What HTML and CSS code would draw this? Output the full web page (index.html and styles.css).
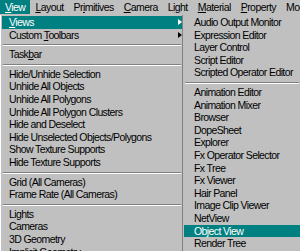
FILE: index.html
```html
<!DOCTYPE html>
<html lang="en">
<head>
  <meta charset="UTF-8">
  <title>View menu</title>
  <link rel="stylesheet" href="styles.css">
</head>
<body>
  <div class="menubar">
    <div class="bar-item active"><u>V</u>iew</div>
    <div class="bar-item"><u>L</u>ayout</div>
    <div class="bar-item">Pr<u>i</u>mitives</div>
    <div class="bar-item"><u>C</u>amera</div>
    <div class="bar-item">Li<u>g</u>ht</div>
    <div class="bar-item"><u>M</u>aterial</div>
    <div class="bar-item"><u>P</u>roperty</div>
    <div class="bar-item">Modify</div>
  </div>

  <div class="menus">
    <div class="menu">
      <div class="item selected has-sub"><u>V</u>iews</div>
      <div class="item has-sub">Custom <u>T</u>oolbars</div>
      <div class="sep"></div>
      <div class="item">Task<u>b</u>ar</div>
      <div class="sep"></div>
      <div class="item">Hide/Unhide Selection</div>
      <div class="item">Unhide All Objects</div>
      <div class="item">Unhide All Polygons</div>
      <div class="item">Unhide All Polygon Clusters</div>
      <div class="item">Hide and Deselect</div>
      <div class="item">Hide Unselected Objects/Polygons</div>
      <div class="item">Show Texture Supports</div>
      <div class="item">Hide Texture Supports</div>
      <div class="sep"></div>
      <div class="item">Grid (All Cameras)</div>
      <div class="item">Frame Rate (All Cameras)</div>
      <div class="sep"></div>
      <div class="item">Lights</div>
      <div class="item">Cameras</div>
      <div class="item">3D Geometry</div>
      <div class="item">Implicit Geometry</div>
    </div>

    <div class="menu submenu">
      <div class="item">Audio Output Monitor</div>
      <div class="item">Expression Editor</div>
      <div class="item">Layer Control</div>
      <div class="item">Script Editor</div>
      <div class="item">Scripted Operator Editor</div>
      <div class="sep"></div>
      <div class="item">Animation Editor</div>
      <div class="item">Animation Mixer</div>
      <div class="item">Browser</div>
      <div class="item">DopeSheet</div>
      <div class="item">Explorer</div>
      <div class="item">Fx Operator Selector</div>
      <div class="item">Fx Tree</div>
      <div class="item">Fx Viewer</div>
      <div class="item">Hair Panel</div>
      <div class="item">Image Clip Viewer</div>
      <div class="item">NetView</div>
      <div class="item selected">Object View</div>
      <div class="item">Render Tree</div>
      <div class="item">Schematic</div>
    </div>
  </div>
</body>
</html>
```

FILE: styles.css
```css
* {
  margin: 0;
  padding: 0;
  box-sizing: border-box;
}

body {
  background-color: #c0c0c0;
  color: #000;
  font-family: "Liberation Sans", Arial, sans-serif;
  font-size: 10.5px;
  width: 300px;
  height: 251px;
  overflow: hidden;
}

u {
  text-decoration: underline;
  text-underline-offset: 1px;
}

.menubar {
  display: flex;
  height: 15px;
  line-height: 15px;
  white-space: nowrap;
  border-bottom: 1px solid #c0c0c0;
}

.bar-item {
  padding: 0 5px;
  letter-spacing: -0.55px;
}

.bar-item.active {
  background-color: #008080;
  color: #fff;
}

.menus {
  display: flex;
  align-items: flex-start;
}

.menu {
  width: 182px;
  flex-shrink: 0;
  padding: 1px 0 0 1px;
  border-left: 1px solid #fff;
  white-space: nowrap;
}

.submenu {
  width: auto;
  flex: 1;
  border-left: 1px solid #808080;
  padding-left: 1px;
}

.item {
  position: relative;
  height: 12.6px;
  line-height: 12.6px;
  padding-left: 7px;
  letter-spacing: -0.6px;
}

.submenu .item {
  padding-left: 10px;
}

.item.selected {
  background-color: #008080;
  color: #fff;
}

.has-sub::after {
  content: "";
  position: absolute;
  right: 0;
  top: 3px;
  border-style: solid;
  border-width: 3.5px 0 3.5px 4px;
  border-color: transparent transparent transparent #000;
}

.has-sub.selected::after {
  border-left-color: #fff;
}

.sep {
  height: 7px;
  margin: 0 1px;
  border-top: 3px solid transparent;
  background:
    linear-gradient(#808080, #808080) top / 100% 1px no-repeat,
    linear-gradient(#fff, #fff) 0 1px / 100% 1px no-repeat;
  background-origin: padding-box;
}
```
